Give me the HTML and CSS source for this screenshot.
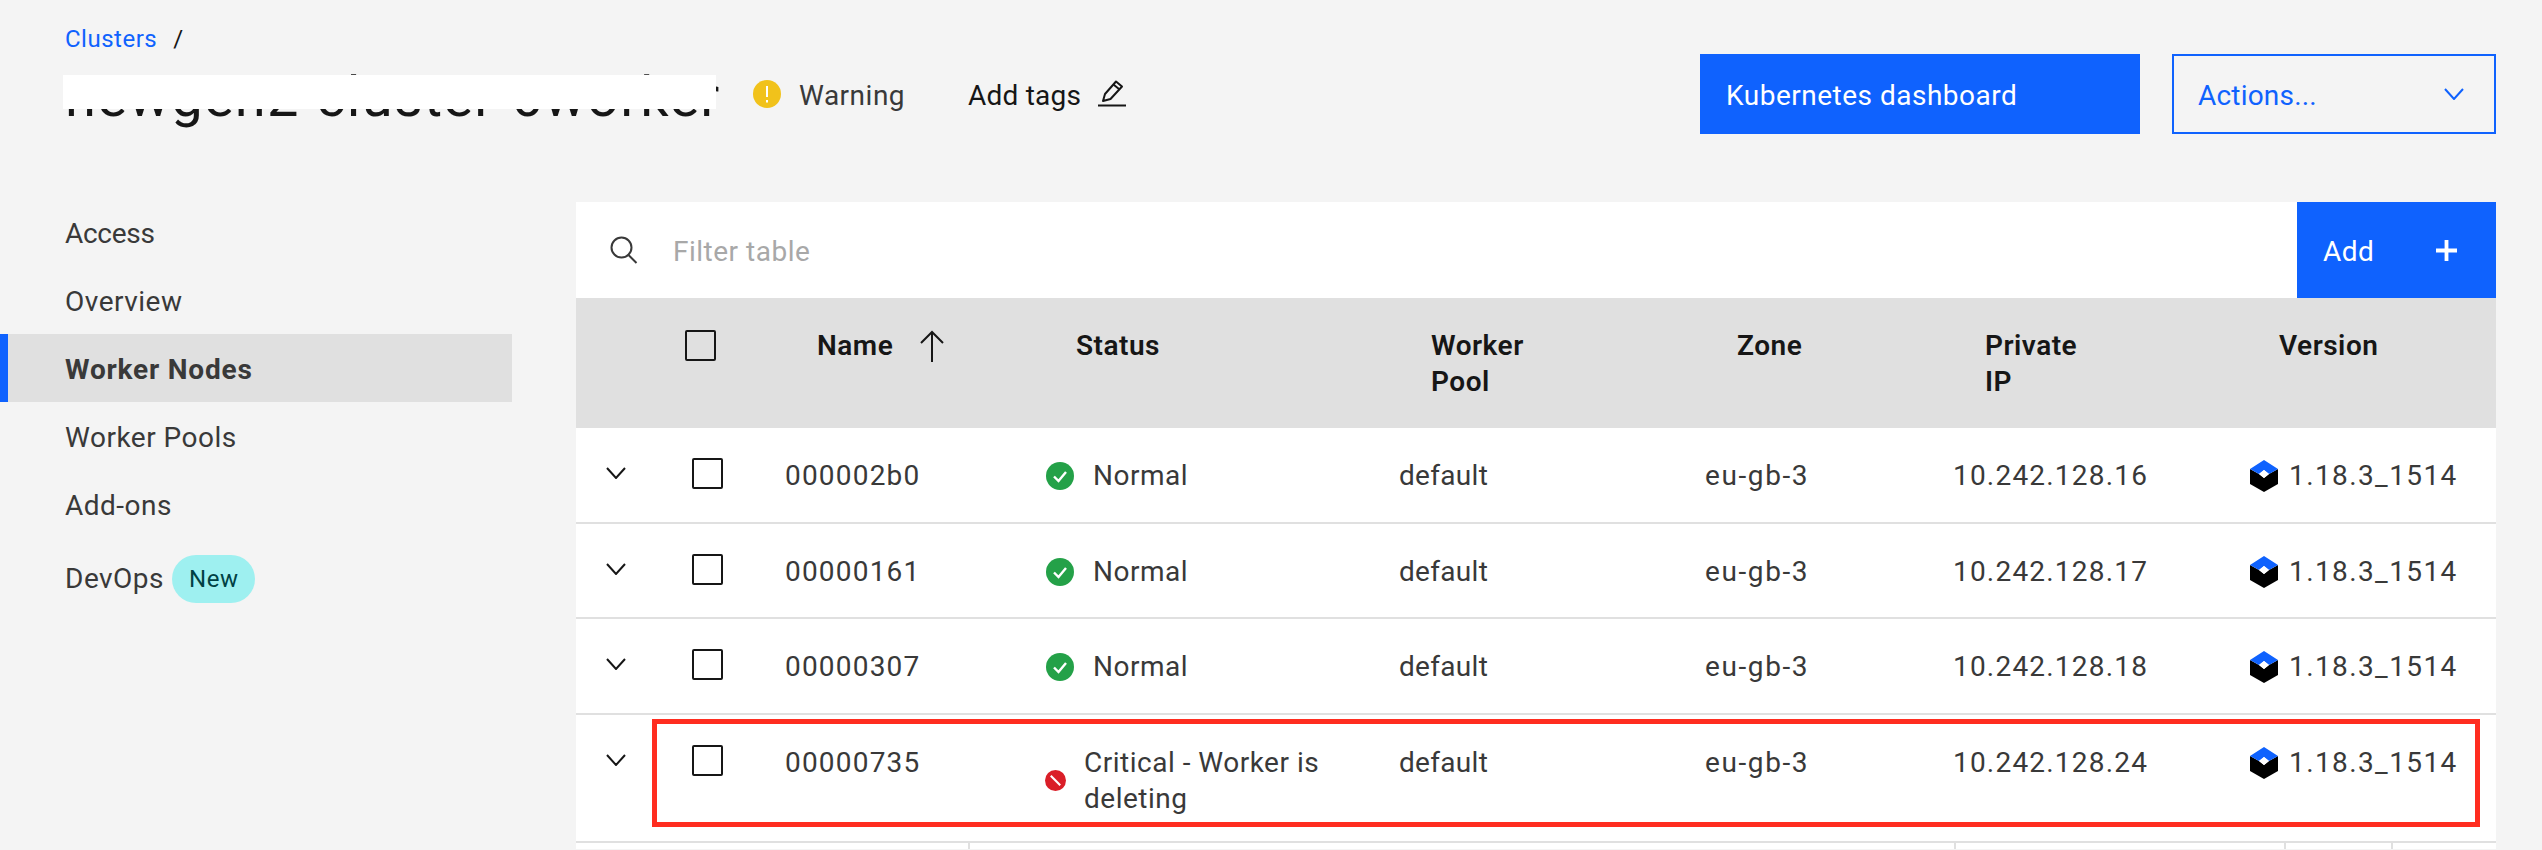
FILE: index.html
```html
<!DOCTYPE html>
<html lang="en">
<head>
    <meta charset="UTF-8">
    <title>Worker Nodes</title>
    <link rel="stylesheet" href="styles.css">
</head>
<body>
    <header class="top">
        <div class="top-left">
            <div class="crumbs"><a class="crumb-link">Clusters</a><span class="crumb-sep">/</span></div>
            <div class="title-row">
                <div class="title-wrap">
                    <h1 class="title">newgen2-cluster-6worker</h1>
                    <div class="title-mask"></div>
                </div>
                <svg class="warn-icon" viewBox="0 0 28 28"><circle cx="14" cy="14" r="14" fill="#f1c21b"/><path d="M14 6v11" stroke="#fff" stroke-width="2"/><path d="M14 20v2.4" stroke="#fff" stroke-width="2"/></svg>
                <span class="warn-text">Warning</span>
                <span class="add-tags">Add tags</span>
                <svg class="edit-icon" viewBox="0 0 28 28" fill="none" stroke="#161616" stroke-width="2"><path d="M0 26.500h28" /><path d="M5 22l2-7L18 2.500l6 5L12.500 20z" stroke-linejoin="round"/><path d="M15.500 5.500l6 5"/></svg>
            </div>
        </div>
        <div class="top-actions">
            <button class="btn-primary">Kubernetes dashboard</button>
            <button class="btn-actions">
                <span>Actions...</span>
                <svg class="actions-chev" viewBox="0 0 20 12" fill="none" stroke="#0f62fe" stroke-width="2"><path d="M1 1l9 10 9-10"/></svg>
            </button>
        </div>
    </header>

    <div class="main">
        <nav class="side">
            <a class="side-item side-access">Access</a>
            <a class="side-item">Overview</a>
            <a class="side-item active">Worker Nodes</a>
            <a class="side-item">Worker Pools</a>
            <a class="side-item">Add-ons</a>
            <a class="side-item side-devops">DevOps <span class="tag">New</span></a>
        </nav>

        <section class="content">
            <div class="toolbar">
                <svg class="search-icon" viewBox="0 0 28 28" fill="none" stroke="#393939" stroke-width="2"><circle cx="11.500" cy="11.500" r="10"/><path d="M18.500 19l8 8"/></svg>
                <span class="filter">Filter table</span>
                <button class="btn-add">
                    <span>Add</span>
                    <svg class="plus-icon" viewBox="0 0 22 22" fill="#fff"><path d="M9 0h4v9h9v4h-9v9H9v-9H0V9h9z"/></svg>
                </button>
            </div>

            <table class="nodes">
                <colgroup>
                    <col class="c-exp"><col class="c-chk"><col class="c-name"><col class="c-status">
                    <col class="c-pool"><col class="c-zone"><col class="c-ip"><col class="c-ver">
                </colgroup>
                <thead>
                    <tr>
                        <th></th>
                        <th class="th-chk"><span class="box"></span></th>
                        <th><span class="name-head">Name
                            <svg class="sort-icon" viewBox="0 0 26 32" fill="none" stroke="#161616" stroke-width="2"><path d="M13 2v30"/><path d="M2 13L13 2l11 11"/></svg>
                        </span></th>
                        <th>Status</th>
                        <th>Worker<br>Pool</th>
                        <th>Zone</th>
                        <th>Private<br>IP</th>
                        <th>Version</th>
                    </tr>
                </thead>
                <tbody id="rows"></tbody>
            </table>
            <div class="next-row">
                <span class="next-cell w1"></span>
                <span class="next-cell w2"></span>
                <span class="next-cell w3"></span>
                <span class="next-cell w4"></span>
                <span class="next-cell"></span>
            </div>
            <div class="red-box"></div>
        </section>
    </div>

    <script>
        const nodes = [
            { id: "000002b0", ip: "10.242.128.16" },
            { id: "00000161", ip: "10.242.128.17" },
            { id: "00000307", ip: "10.242.128.18" },
            { id: "00000735", ip: "10.242.128.24", critical: true }
        ];
        const okIcon = `<svg class="ok-icon" viewBox="0 0 28 28"><circle cx="14" cy="14" r="14" fill="#24a148"/><path d="M8 14.500l4.500 4.500L20 10" fill="none" stroke="#fff" stroke-width="2.400"/></svg>`;
        const badIcon = `<svg class="bad-icon" viewBox="0 0 20 20"><circle cx="10" cy="10" r="10" fill="#da1e28"/><path d="M5.500 5.500l9 9" stroke="#fff" stroke-width="2"/></svg>`;
        const verIcon = `<svg class="ver-icon" viewBox="0 0 28 32"><path d="M0 9l9 5 5 4 5-4 9-5v15l-14 8-14-8z" fill="#000"/><path d="M14 0l14 9-9 5-5-4-5 4-9-5z" fill="#0f62fe"/><path d="M14 10l5 4-5 4-5-4z" fill="#fff"/></svg>`;

        document.getElementById("rows").innerHTML = nodes.map((node) => `
            <tr class="${node.critical ? "row-tall" : ""}">
                <td><svg class="row-chev" viewBox="0 0 20 12" fill="none" stroke="#161616" stroke-width="2"><path d="M1 1l9 10 9-10"/></svg></td>
                <td><span class="box"></span></td>
                <td class="digits">${node.id}</td>
                <td>${node.critical
                    ? `<span class="status">${badIcon}<span class="crit-text">Critical - Worker is deleting</span></span>`
                    : `<span class="status">${okIcon}<span>Normal</span></span>`}</td>
                <td class="pool">default</td>
                <td class="zone">eu-gb-3</td>
                <td class="digits">${node.ip}</td>
                <td><span class="version">${verIcon}<span>1.18.3_1514</span></span></td>
            </tr>`).join("");
    </script>
</body>
</html>
```
FILE: styles.css
```css
html, body {
    margin: 0;
    padding: 0;
}

body {
    width: 2542px;
    height: 850px;
    overflow: hidden;
    background-color: #f4f4f4;
    font-family: Roboto, "Liberation Sans", sans-serif;
    font-size: 28px;
    letter-spacing: 0.5px;
    color: #393939;
}

.top {
    display: flex;
    justify-content: space-between;
    height: 202px;
    padding: 0 46px 0 65px;
    box-sizing: border-box;
}

.crumbs {
    padding-top: 24px;
    height: 30px;
    font-size: 24px;
    line-height: 30px;
    letter-spacing: 0.5px;
    display: flex;
}

.crumb-link {
    color: #0f62fe;
}

.crumb-sep {
    margin-left: 16px;
    color: #161616;
}

.title-row {
    display: flex;
    align-items: flex-start;
    margin-top: 21px;
}

.title-wrap {
    position: relative;
    width: 651px;
}

.title {
    margin: -14px 0 0;
    font-size: 56px;
    font-weight: 400;
    line-height: 72px;
    letter-spacing: 1.2px;
    color: #161616;
    white-space: nowrap;
}

.title-mask {
    position: absolute;
    left: -2px;
    top: 0;
    width: 653px;
    height: 34px;
    background: #fff;
}

.warn-icon {
    width: 28px;
    height: 28px;
    margin: 5px 0 0 37px;
}

.warn-text {
    margin-left: 18px;
    line-height: 36px;
    margin-top: 3px;
}

.add-tags {
    margin-left: 63px;
    line-height: 36px;
    margin-top: 3px;
    letter-spacing: 0.2px;
    color: #161616;
}

.edit-icon {
    width: 28px;
    height: 28px;
    margin: 4px 0 0 17px;
}

.top-actions {
    display: flex;
    gap: 32px;
    padding-top: 54px;
}

.btn-primary, .btn-actions, .btn-add {
    font: inherit;
    letter-spacing: inherit;
    border: none;
    border-radius: 0;
    text-align: left;
}

.btn-primary {
    width: 440px;
    height: 80px;
    padding: 2px 26px 0;
    background-color: #0f62fe;
    color: #fff;
}

.btn-actions {
    display: flex;
    align-items: center;
    justify-content: space-between;
    width: 324px;
    height: 80px;
    padding: 0 30px 0 24px;
    box-sizing: border-box;
    background: transparent;
    border: 2px solid #0f62fe;
    color: #0f62fe;
    letter-spacing: 0.2px;
}

.btn-actions span {
    padding-top: 2px;
}

.actions-chev {
    width: 20px;
    height: 12px;
}

.main {
    display: flex;
    padding-right: 46px;
}

.side {
    width: 512px;
    margin-right: 64px;
    flex: none;
    margin-top: -4px;
}

.side-item {
    display: block;
    height: 68px;
    line-height: 72px;
    padding-left: 65px;
}

.side-access {
    letter-spacing: -0.3px;
}

.side-item.active {
    padding-left: 57px;
    border-left: 8px solid #0f62fe;
    background-color: #e0e0e0;
    font-weight: 700;
    letter-spacing: 0.8px;
}

.side-devops {
    display: flex;
    align-items: center;
    gap: 8px;
    height: 72px;
    margin-top: 5px;
    line-height: 36px;
}

.tag {
    display: inline-block;
    height: 48px;
    line-height: 48px;
    padding: 0 17px;
    border-radius: 24px;
    background-color: #9ef0f0;
    color: #004144;
    font-size: 24px;
}

.content {
    position: relative;
    flex: 1;
    min-width: 0;
}

.toolbar {
    display: flex;
    align-items: center;
    height: 96px;
    padding-left: 34px;
    background-color: #fff;
}

.search-icon {
    width: 28px;
    height: 28px;
}

.filter {
    flex: 1;
    margin-left: 35px;
    padding-top: 2px;
    color: #a8a8a8;
}

.btn-add {
    display: flex;
    align-items: center;
    justify-content: space-between;
    width: 199px;
    height: 96px;
    padding: 0 39px 0 26px;
    box-sizing: border-box;
    background-color: #0f62fe;
    color: #fff;
}

.btn-add span {
    padding-top: 2px;
}

.plus-icon {
    width: 21px;
    height: 21px;
}

.nodes {
    width: 1920px;
    table-layout: fixed;
    border-collapse: separate;
    border-spacing: 0;
    background-color: #fff;
}

.c-exp { width: 100px; }
.c-chk { width: 93px; }
.c-name { width: 259px; }
.c-status { width: 355px; }
.c-pool { width: 306px; }
.c-zone { width: 248px; }
.c-ip { width: 294px; }
.c-ver { width: 265px; }

.nodes th {
    height: 130px;
    box-sizing: border-box;
    padding: 30px 0 0 48px;
    vertical-align: top;
    text-align: left;
    line-height: 36px;
    letter-spacing: 0.5px;
    background-color: #e0e0e0;
    font-weight: 600;
    color: #161616;
}

.nodes th.th-chk {
    padding: 32px 0 0 9px;
}

.nodes td {
    box-sizing: border-box;
    height: 95.500px;
    padding: 30px 0 0 16px;
    vertical-align: top;
    line-height: 36px;
    border-bottom: 2px solid #e0e0e0;
    white-space: nowrap;
}

.nodes td:first-child {
    padding: 39px 0 0 30px;
}

.nodes .row-tall td {
    height: 128px;
}

.digits {
    letter-spacing: 1.2px;
}

.pool {
    letter-spacing: 0.3px;
}

.zone {
    letter-spacing: 1.6px;
}

.name-head {
    display: flex;
    align-items: center;
    gap: 26px;
}

.sort-icon {
    width: 26px;
    height: 32px;
}

.box {
    display: block;
    width: 31px;
    height: 31px;
    box-sizing: border-box;
    border: 2px solid #161616;
    border-radius: 2px;
}

.row-chev {
    display: block;
    width: 20px;
    height: 12px;
}

.status {
    display: flex;
    align-items: center;
}

.ok-icon {
    width: 28px;
    height: 28px;
    margin: 0 19px 0 2px;
}

.bad-icon {
    width: 21px;
    height: 21px;
    margin: 0 18px 0 1px;
}

.crit-text {
    width: 270px;
    white-space: normal;
}

.version {
    display: flex;
    align-items: center;
    letter-spacing: 1.4px;
}

.ver-icon {
    width: 28px;
    height: 32px;
    margin: 0 11px 0 3px;
}

.next-row {
    display: flex;
    height: 6px;
    background-color: #fff;
}

.next-cell {
    border-right: 2px solid #e0e0e0;
    box-sizing: border-box;
}

.next-cell:last-child {
    flex: 1;
    border-right: none;
}

.w1 { width: 394px; }
.w2 { width: 986px; }
.w3 { width: 330px; }
.w4 { width: 107px; }

.red-box {
    position: absolute;
    left: 76px;
    top: 517px;
    width: 1828px;
    height: 108px;
    box-sizing: border-box;
    border: 5px solid #ff2d20;
}
```
